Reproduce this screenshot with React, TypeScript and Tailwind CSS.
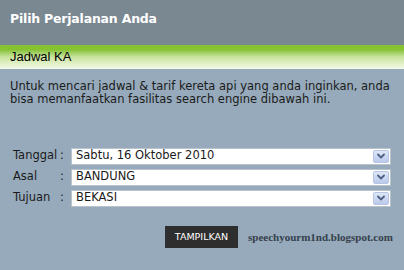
import { useState } from "react";

const FIELDS = [
  { label: "Tanggal", value: "Sabtu, 16 Oktober 2010" },
  { label: "Asal", value: "BANDUNG" },
  { label: "Tujuan", value: "BEKASI" },
];

function Chevron() {
  return (
    <span className="flex h-[13px] w-[16px] shrink-0 items-center justify-center rounded-[2px] border border-[#b7c6e5] bg-gradient-to-b from-[#dfe7f7] to-[#b9c9ea]">
      <svg width="8" height="6" viewBox="0 0 8 6" fill="none" stroke="#4d6185" strokeWidth="1.8" strokeLinecap="round" strokeLinejoin="round">
        <path d="M1 1.5 4 4.5 7 1.5" />
      </svg>
    </span>
  );
}

export default function App() {
  const [values] = useState(FIELDS);
  return (
    <div className="flex h-[270px] w-[404px] flex-col bg-[#96aabb] font-['DejaVu_Sans',sans-serif] text-[#1a1a1a]">
      <div className="flex h-[45px] items-center bg-[#7a8891] px-[10px] pb-[6px]">
        <h1 className="font-['DejaVu_Sans',sans-serif] text-[12.5px] font-bold tracking-[-0.2px] text-white">Pilih Perjalanan Anda</h1>
      </div>
      <div className="flex h-[24px] items-center bg-gradient-to-b from-[#86c232] from-20% via-[#c9e49c] to-[#f4f9ea] px-[10px]">
        <h2 className="font-['Liberation_Sans',Arial,sans-serif] text-[13px] text-black">Jadwal KA</h2>
      </div>

      <p className="mt-[11px] pl-[10px] pr-[6px] text-[11.5px] leading-[13px]">
        Untuk mencari jadwal &amp; tarif kereta api yang anda inginkan, anda bisa memanfaatkan fasilitas search engine dibawah ini.
      </p>

      <div className="mt-[42px] flex flex-col gap-[5px] pl-[13px] pr-[13px]">
        {values.map((f) => (
          <div key={f.label} className="flex h-[16px] items-center text-[11.5px]">
            <span className="w-[47px]">{f.label}</span>
            <span className="w-[11px]">:</span>
            <div className="flex h-[17px] flex-1 items-center justify-between border border-[#b9c3cc] bg-white pl-[4px] pr-[1px]">
              <span>{f.value}</span>
              <Chevron />
            </div>
          </div>
        ))}
      </div>

      <div className="mt-[20px] flex items-center pl-[165px]">
        <button className="h-[22px] w-[73px] bg-[#2e2e2e] text-[9.5px] text-white">TAMPILKAN</button>
        <span className="ml-[10px] font-['Liberation_Serif',serif] text-[11px] font-bold text-[#35404b]">
          speechyourm1nd.blogspot.com
        </span>
      </div>
    </div>
  );
}
